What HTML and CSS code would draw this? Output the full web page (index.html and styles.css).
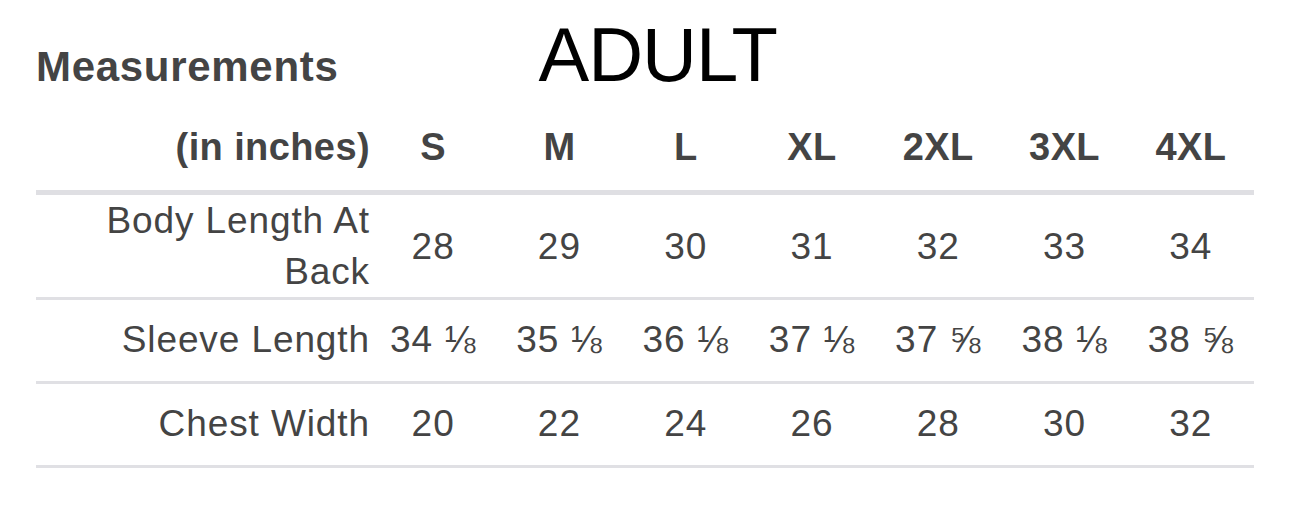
FILE: index.html
```html
<!DOCTYPE html>
<html lang="en">
<head>
<meta charset="utf-8">
<title>Measurements – Adult</title>
<link rel="stylesheet" href="styles.css">
</head>
<body>
<main class="page">
  <header class="title-row">
    <h2 class="section-title">Measurements</h2>
    <h1 class="group-title">ADULT</h1>
  </header>
  <table class="size-table">
    <colgroup>
      <col class="col-label">
      <col class="col-size"><col class="col-size"><col class="col-size"><col class="col-size"><col class="col-size"><col class="col-size"><col class="col-size">
    </colgroup>
    <thead>
      <tr>
        <th class="label">(in inches)</th>
        <th>S</th><th>M</th><th>L</th><th>XL</th><th>2XL</th><th>3XL</th><th>4XL</th>
      </tr>
    </thead>
    <tbody>
      <tr>
        <td class="label">Body Length At Back</td>
        <td>28</td><td>29</td><td>30</td><td>31</td><td>32</td><td>33</td><td>34</td>
      </tr>
      <tr>
        <td class="label">Sleeve Length</td>
        <td>34 ⅛</td><td>35 ⅛</td><td>36 ⅛</td><td>37 ⅛</td><td>37 ⅝</td><td>38 ⅛</td><td>38 ⅝</td>
      </tr>
      <tr>
        <td class="label">Chest Width</td>
        <td>20</td><td>22</td><td>24</td><td>26</td><td>28</td><td>30</td><td>32</td>
      </tr>
    </tbody>
  </table>
</main>
</body>
</html>
```

FILE: styles.css
```css
html, body {
  margin: 0;
  padding: 0;
  background: #ffffff;
}

body {
  font-family: "Liberation Sans", Arial, Helvetica, sans-serif;
  color: #444444;
}

.page {
  padding: 0 36px;
}

.title-row {
  display: flex;
  align-items: baseline;
  padding-top: 10px;
  height: 90px;
}

.section-title {
  margin: 0;
  font-size: 42px;
  font-weight: 700;
  letter-spacing: 0.7px;
  color: #444444;
  line-height: 90px;
}

.group-title {
  margin: 0 0 0 200px;
  font-size: 76px;
  font-weight: 400;
  letter-spacing: -1px;
  color: #000000;
  line-height: 90px;
}

.size-table {
  width: 1218px;
  border-collapse: separate;
  border-spacing: 0;
  table-layout: fixed;
}

.col-label {
  width: 334px;
}

.size-table th {
  font-size: 38px;
  font-weight: 700;
  letter-spacing: 0.4px;
  line-height: 44px;
  padding: 25px 0 21px;
  text-align: center;
  border-bottom: 5px solid #dfdfe3;
  color: #444444;
}

.size-table td {
  font-size: 37px;
  font-weight: 400;
  letter-spacing: 1px;
  line-height: 51px;
  height: 81px;
  padding: 0 0 2px;
  text-align: center;
  vertical-align: middle;
  border-bottom: 3px solid #e0e0e4;
  color: #444444;
  white-space: nowrap;
}

.size-table tbody tr:first-child td {
  padding-bottom: 0;
}

.size-table tbody tr:not(:first-child) td {
  height: 79px;
}

.size-table th.label,
.size-table td.label {
  text-align: right;
  padding-right: 0;
}

.size-table td.label {
  white-space: normal;
  letter-spacing: 0.9px;
}
```
